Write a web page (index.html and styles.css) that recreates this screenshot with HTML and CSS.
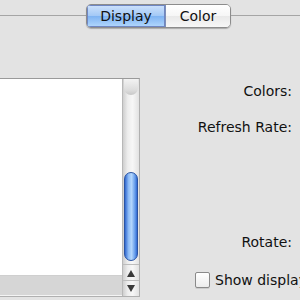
FILE: index.html
```html
<!DOCTYPE html>
<html lang="en">
<head>
<meta charset="UTF-8">
<meta name="viewport" content="width=device-width, initial-scale=1.0">
<title>Display</title>
<link rel="stylesheet" href="styles.css">
</head>
<body>
  <div class="tabbar">
    <div class="rule rule-left"></div>
    <div class="segments">
      <div class="seg seg-on">Display</div>
      <div class="seg">Color</div>
    </div>
    <div class="rule"></div>
  </div>

  <div class="pane">
    <div class="listbox">
      <div class="listrows">
        <div class="rows"></div>
        <div class="row-gray"></div>
      </div>
      <div class="scrollbar">
        <div class="track">
          <div class="track-cap"></div>
          <div class="thumb"></div>
        </div>
        <div class="arrow arrow-up"></div>
        <div class="arrow arrow-down"></div>
      </div>
    </div>

    <div class="settings">
      <div class="label label-colors">Colors:</div>
      <div class="label label-refresh">Refresh Rate:</div>
      <div class="label label-rotate">Rotate:</div>
      <label class="check">
        <span class="box"></span>
        <span class="check-text">Show displays in menu bar</span>
      </label>
    </div>
  </div>
</body>
</html>
```

FILE: styles.css
```css
body {
  margin: 0;
  width: 300px;
  height: 300px;
  overflow: hidden;
  background-color: #e3e3e3;
  font-family: "DejaVu Sans", "Liberation Sans", sans-serif;
  font-size: 14px;
  color: #111;
}

/* segmented control across the top line */
.tabbar {
  display: flex;
  align-items: center;
  padding-top: 4px;
  height: 24px;
}
.rule {
  flex: 1;
  height: 1px;
  margin-top: -2px;
  background-color: #a5a5a5;
}
.rule-left {
  flex: 0 0 86px;
}
.segments {
  display: flex;
  flex-shrink: 0;
  height: 22px;
  border: 1px solid #8c8c8c;
  border-radius: 5px;
  overflow: hidden;
  box-shadow: 0 1px 1px rgba(0, 0, 0, 0.25);
}
.seg {
  display: flex;
  align-items: center;
  justify-content: center;
  font-size: 14px;
  background: linear-gradient(#ffffff, #f6f6f6 50%, #e9e9e9 51%, #f7f7f7);
}
.seg-on {
  width: 78px;
  border-right: 1px solid #7d8fb8;
  background: linear-gradient(#cfe2fb, #a2c8f6 50%, #7eb3f2 51%, #b3d8fd);
  box-shadow: inset 0 0 0 1px #6f86c2;
}
.seg:last-child {
  width: 64px;
}

/* main pane */
.pane {
  display: flex;
  padding-top: 50px;
}

.listbox {
  display: flex;
  flex-shrink: 0;
  width: 139px;
  height: 217px;
  border-top: 1px solid #9a9a9a;
  border-right: 1px solid #b0b0b0;
  border-bottom: 1px solid #b0b0b0;
  background-color: #ffffff;
}
.listrows {
  flex: 1;
  display: flex;
  flex-direction: column;
}
.rows {
  flex: 1;
}
.row-gray {
  height: 19px;
  border-top: 1px solid #cfcfcf;
  border-bottom: 1px solid #f4f4f4;
  background-color: #d6d6d6;
}

.scrollbar {
  display: flex;
  flex-direction: column;
  width: 16px;
  border-left: 1px solid #b8b8b8;
  background: linear-gradient(90deg, #cfcfcf, #eeeeee 30%, #f7f7f7 60%, #e2e2e2);
}
.track {
  flex: 1;
  position: relative;
}
.track-cap {
  height: 16px;
  border-radius: 0 0 8px 8px;
  background: linear-gradient(#f3f3f3, #dcdcdc 70%, #c8c8c8);
  margin: 0 1px;
}
.thumb {
  position: absolute;
  left: 1px;
  right: 1px;
  top: 93px;
  height: 87px;
  border-radius: 8px;
  border: 1px solid #2a54a3;
  background: linear-gradient(90deg, #3168cf, #8fbdf7 30%, #b3d6fc 55%, #5f98ea 85%, #3168cf);
}
.arrow {
  height: 15px;
  position: relative;
  border-top: 1px solid #bdbdbd;
}
.arrow::after {
  content: "";
  position: absolute;
  left: 4px;
  width: 0;
  height: 0;
  border-left: 4px solid transparent;
  border-right: 4px solid transparent;
}
.arrow-up::after {
  top: 5px;
  border-bottom: 7px solid #3a3a3a;
}
.arrow-down::after {
  top: 4px;
  border-top: 7px solid #3a3a3a;
}

/* right column */
.settings {
  flex: 1;
  min-width: 0;
  display: flex;
  flex-direction: column;
  align-items: flex-end;
  padding-right: 8px;
  white-space: nowrap;
}
.label {
  line-height: 16px;
}
.label-colors {
  margin-top: 5px;
}
.label-refresh {
  margin-top: 20px;
}
.label-rotate {
  margin-top: 99px;
}
.check {
  display: flex;
  align-items: center;
  align-self: flex-start;
  gap: 5px;
  margin-top: 22px;
  margin-left: 55px;
}
.box {
  flex-shrink: 0;
  width: 13px;
  height: 14px;
  border: 1px solid #8a8a8a;
  border-radius: 2px;
  background: linear-gradient(#ffffff, #ececec);
  box-shadow: 0 1px 0 rgba(0, 0, 0, 0.1);
}
```
